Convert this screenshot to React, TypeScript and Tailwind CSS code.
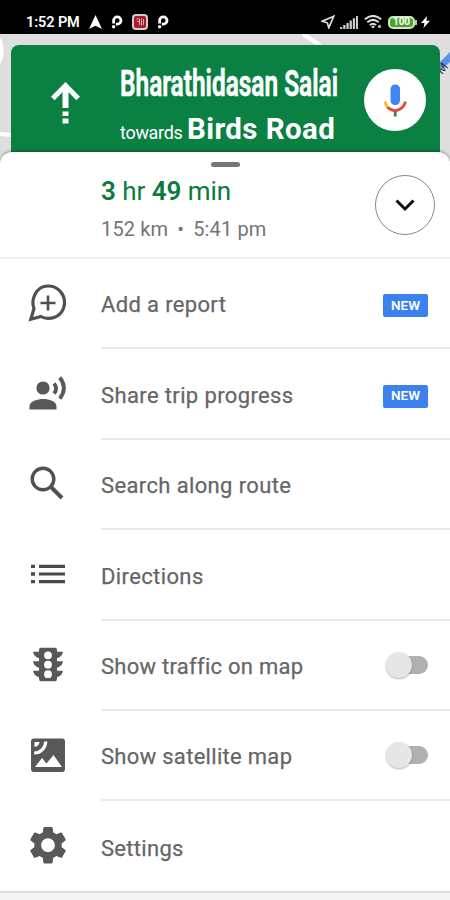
import React from 'react';

interface MenuItem {
  label: string;
  icon: React.ReactNode;
  badge?: string;
  toggle?: boolean;
  labelClass: string;
}

// All menu icons share a 48x48 box, centered at 24,24
const ReportIcon = () => (
  <svg width="48" height="48" viewBox="0 0 48 48" fill="none" stroke="#505050" strokeWidth="3.2">
    <path d="M7.800 40.200L11 29.500C7.500 21 13 7 25 7C34.500 7 41.500 14.500 41.500 23.500C41.500 32.500 35 39.300 25 39.300C22 39.300 19.800 38.600 18 37.500Z" />
    <path d="M25 16.500v15M17.500 24h15" strokeWidth="2.6" />
  </svg>
);

const ShareIcon = () => (
  <svg width="48" height="48" viewBox="0 0 48 48" fill="#585858">
    <circle cx="20" cy="19" r="6.6" />
    <path d="M6.5 40.5V37.2C6.5 32.5 14.5 30 20.2 30S33.5 32.5 33.5 37.2v3.3z" />
    <path d="M31 14.5Q35.3 19.5 31 24.5M36.8 8.5Q45 19 36.8 29.5" fill="none" stroke="#585858" strokeWidth="3.8" />
  </svg>
);

const SearchIcon = () => (
  <svg width="48" height="48" viewBox="0 0 48 48" fill="none" stroke="#505050" strokeWidth="3.4">
    <circle cx="20" cy="20" r="10.8" />
    <path d="M28.5 28.5L39 39" strokeWidth="4" />
  </svg>
);

const ListIcon = () => (
  <svg width="48" height="48" viewBox="0 0 48 48" fill="#4a4a4a">
    <path d="M8 14.7h4v3.4H8zM8 22.3h4v3.4H8zM8 29.9h4v3.4H8zM16 14.7h26v3.2H16zM16 22.4h26v3.2H16zM16 30h26v3.2H16z" />
  </svg>
);

const TrafficIcon = () => (
  <svg width="48" height="48" viewBox="0 0 48 48" fill="#585858">
    <path
      transform="translate(0 .8)"
      fillRule="evenodd"
      d="M18 7h14q2 0 2 2v2h6q-1 5-6 6.500v3h6q-1 5-6 6.500v3h6q-1 5-6 6.500v1.500q0 2.500-2 2.500H18q-2 0-2-2.500v-1.500q-5-1.500-6-6.500h6v-3q-5-1.500-6-6.500h6v-3q-5-1.500-6-6.500h6V9q0-2 2-2zM25 10.600a3.900 3.900 0 1 0 0 7.800 3.900 3.900 0 1 0 0-7.800zM25 20a3.900 3.900 0 1 0 0 7.800 3.900 3.900 0 1 0 0-7.800zM25 29.500a3.900 3.900 0 1 0 0 7.800 3.900 3.900 0 1 0 0-7.800z"
    />
  </svg>
);

const SatelliteIcon = () => (
  <svg width="48" height="48" viewBox="0 0 48 48">
    <rect x="8" y="7.500" width="34" height="33.500" rx="3" fill="#585858" />
    <path d="M11.500 11h5q-.5 4.500-5 5z" fill="#fff" />
    <path d="M22.700 10.500a11.500 11.500 0 0 1-11.500 11.500" fill="none" stroke="#fff" strokeWidth="3.200" />
    <path d="M12 36l7-9 4.500 5.500L30.500 24 39 36z" fill="#fff" />
  </svg>
);

const SettingsIcon = () => (
  <svg width="48" height="48" viewBox="0 0 48 48">
    <path
      transform="translate(2.200 1.400) scale(1.900)"
      fill="#585858"
      d="M19.140 12.940c.04-.3.06-.61.06-.94 0-.32-.02-.64-.07-.94l2.030-1.580c.18-.14.23-.41.12-.61l-1.920-3.320c-.12-.22-.37-.29-.59-.22l-2.390.96c-.5-.38-1.030-.7-1.620-.94l-.36-2.540c-.04-.24-.24-.41-.48-.41h-3.840c-.24 0-.43.17-.47.41l-.36 2.540c-.59.24-1.130.57-1.620.94l-2.390-.96c-.22-.08-.47 0-.59.22L2.740 8.870c-.12.21-.08.47.12.61l2.030 1.580c-.05.3-.09.63-.09.94s.02.64.07.94l-2.030 1.580c-.18.14-.23.41-.12.61l1.920 3.320c.12.22.37.29.59.22l2.390-.96c.5.38 1.030.7 1.620.94l.36 2.540c.05.24.24.41.48.41h3.840c.24 0 .44-.17.47-.41l.36-2.540c.59-.24 1.130-.56 1.620-.94l2.390.96c.22.08.47 0 .59-.22l1.920-3.320c.12-.22.07-.47-.12-.61l-2.010-1.580zM12 15.600c-1.980 0-3.600-1.620-3.600-3.600s1.620-3.600 3.600-3.600 3.600 1.620 3.600 3.600-1.620 3.600-3.600 3.600z"
    />
  </svg>
);

const menuItems: MenuItem[] = [
  { label: 'Add a report', icon: <ReportIcon />, badge: 'NEW', labelClass: 'tracking-[0.35px]' },
  { label: 'Share trip progress', icon: <ShareIcon />, badge: 'NEW', labelClass: 'tracking-[0.37px]' },
  { label: 'Search along route', icon: <SearchIcon />, labelClass: 'tracking-[0.37px]' },
  { label: 'Directions', icon: <ListIcon />, labelClass: 'tracking-[0.38px]' },
  { label: 'Show traffic on map', icon: <TrafficIcon />, toggle: true, labelClass: 'tracking-[0.27px]' },
  { label: 'Show satellite map', icon: <SatelliteIcon />, toggle: true, labelClass: 'tracking-[0.3px]' },
  { label: 'Settings', icon: <SettingsIcon />, labelClass: 'tracking-[0.3px]' },
];

const ParkIcon = () => (
  <svg width="13" height="14" viewBox="0 0 13 14" fill="none" stroke="#fff" strokeWidth="2.800">
    <path d="M2.600 8.500V5.500a3.700 3.700 0 1 1 3.700 3.700H4.800" />
    <circle cx="2.600" cy="11.800" r="1.700" fill="#fff" stroke="none" />
  </svg>
);

const StatusBar = () => (
  <header className="flex h-[34px] shrink-0 items-center bg-black pt-[10px] pr-[20px] pl-[26px] text-white">
    <span className="w-[63px] pt-[2px] text-[14.5px] leading-none font-semibold tracking-[-0.1px] whitespace-nowrap">1:52 PM</span>
    <svg width="13" height="14" viewBox="0 0 13 14" fill="#fff">
      <path d="M6.500 0L13 14 6.500 10.800 0 14z" />
    </svg>
    <span className="ml-[9px]"><ParkIcon /></span>
    <svg className="ml-[8px]" width="16" height="16" viewBox="0 0 16 16">
      <rect x="1" y="1" width="14" height="14" rx="3" fill="#a51d2d" stroke="#d7cbd0" strokeWidth="2" />
      <path d="M4.500 5h3v6M5 7.500h2M9.500 4.500v7M11.500 5v6" fill="none" stroke="#e3a4aa" strokeWidth="1" />
    </svg>
    <span className="ml-[9px]"><ParkIcon /></span>
    <div className="ml-auto flex items-center">
      <svg width="14" height="14" viewBox="0 0 14 14" fill="none" stroke="#ddd" strokeWidth="1.700">
        <path d="M12.800 1.200L1.300 6.200l5 1.600 1.500 5z" />
      </svg>
      <svg className="ml-[5px]" width="18" height="13" viewBox="0 0 18 13" fill="#ccc">
        <path d="M0 11h2.300v2H0zM3.200 9h2.300v4H3.200zM6.400 7h2.300v6H6.400zM9.600 4.500h2.300V13H9.600zM12.800 2.300h2.300V13h-2.300zM16 0h2v13h-2z" />
      </svg>
      <svg className="ml-[6px]" width="18" height="14" viewBox="0 0 18 14" fill="none" stroke="#ddd" strokeWidth="2">
        <path d="M.8 4.200Q9-2.400 17.200 4.200M3.300 7.200Q9 2.600 14.700 7.200M5.800 10Q9 7.400 12.200 10" />
        <path d="M9 10.200l1.800 1.500L9 13.500l-1.800-1.800z" fill="#ddd" stroke="none" />
        <circle cx="15.500" cy="11.500" r="1.800" fill="#aaa" stroke="none" />
      </svg>
      <span className="ml-[6px] flex h-[13px] w-[27px] items-center justify-center rounded-[5px] border-2 border-[#cfe8c4] bg-[#4aa626] text-[10px] leading-none font-bold">
        100
      </span>
      <span className="h-[5px] w-[2px] bg-[#bbb]" />
      <svg className="ml-[4px]" width="9" height="12" viewBox="0 0 9 12" fill="#fff">
        <path d="M6 0L0 7h3.500L2.500 12 9 4.700H5.300z" />
      </svg>
    </div>
  </header>
);

const MicButton = () => (
  <button className="flex size-[62px] items-center justify-center rounded-full bg-white">
    <svg width="26" height="36" viewBox="0 0 26 36" fill="none">
      <rect x="8.500" y="2.500" width="9.500" height="20.500" rx="4.500" fill="#4285f4" />
      <path d="M3 19.500Q3.300 23 6 25.700" stroke="#fbbc05" strokeWidth="2.800" />
      <path d="M5.500 25.200Q13 32 20.500 25.200Q23 22.500 23.400 19.500" stroke="#dd4b3e" strokeWidth="2.800" />
      <path d="M13.200 29.500v5" stroke="#34853f" strokeWidth="2.800" />
    </svg>
  </button>
);

const DirectionBanner = () => (
  <section className="mr-[10px] ml-[11px] flex h-[120px] rounded-[8px] bg-[#0b8043] text-white">
    <svg className="mt-[36px] ml-[40px] shrink-0" width="29" height="44" viewBox="0 0 29 44" fill="none" stroke="#fff">
      <path d="M1.800 17.500L14.500 4.500l12.700 13" strokeWidth="5" />
      <path d="M14.500 5v22" strokeWidth="6" />
      <path d="M14.500 30.500v4.500M14.500 37.500v5" strokeWidth="6" />
    </svg>
    <div className="ml-[40px] w-[244px] pt-[18px] whitespace-nowrap">
      <h1 className="w-max origin-left scale-x-[0.66] text-[37px] leading-[42px] font-semibold [-webkit-text-stroke:0.7px_#fff]">Bharathidasan Salai</h1>
      <p className="flex items-baseline pt-[7px] leading-[34px]">
        <span className="w-[67px] text-[18px] tracking-[-0.3px]">towards</span>
        <b className="text-[29.5px] font-bold tracking-[0.4px]">Birds Road</b>
      </p>
    </div>
    <div className="mt-[24px]"><MicButton /></div>
  </section>
);

const Toggle = () => (
  <span className="flex h-[27px] w-[42px] items-center">
    <span className="z-10 size-[26px] shrink-0 rounded-full bg-[#e6e6e6] shadow-[0_1px_2px_rgba(0,0,0,0.3)]" />
    <span className="-ml-[13px] h-[18px] w-[29px] rounded-r-full bg-[#b0b0b0]" />
  </span>
);

const MenuRow: React.FC<{ item: MenuItem; last: boolean }> = ({ item, last }) => (
  <li className="flex h-[90.4px] shrink-0 pl-[23px]">
    <span className="flex w-[78px] items-center pb-[3px]">{item.icon}</span>
    <div className={`flex flex-1 items-center justify-between pr-[22px] ${last ? '' : 'border-b-2 border-[#e9e9e9]'}`}>
      <span className={`pt-[4.6px] text-[22px] leading-[28px] whitespace-nowrap text-[#666] [-webkit-text-stroke:0.25px_#666] ${item.labelClass}`}>{item.label}</span>
      {item.badge && (
        <span className="mt-[5px] flex h-[23px] w-[45px] items-center justify-center rounded-[2px] bg-[#3b82ee] text-[13.5px] leading-none font-semibold text-white">
          {item.badge}
        </span>
      )}
      {item.toggle && <Toggle />}
    </div>
  </li>
);

const App: React.FC = () => {
  return (
    <div className="flex h-[900px] w-[450px] flex-col overflow-hidden bg-[#dedede] font-[Roboto,sans-serif]">
      <StatusBar />
      <div className="relative h-[118px] shrink-0 pt-[11px]">
        {/* Bits of the map that show around the banner */}
        <svg className="absolute inset-0" width="450" height="130" viewBox="0 0 450 130">
          <path d="M0 4q5 5 3 20L0 30z" fill="#fff" />
          <path d="M303 0l17 11M0 100l12 1" stroke="#fff" strokeWidth="4" />
          <path d="M438 30l12-12v10l-12 11z" fill="#5b94e6" />
          <text x="442" y="41" fontSize="12" fill="#333" transform="rotate(-50 442 41)">M</text>
        </svg>
        <div className="relative"><DirectionBanner /></div>
      </div>

      <main className="relative flex flex-1 flex-col rounded-t-[12px] bg-white shadow-[0_-1px_3px_rgba(0,0,0,0.35)]">
        <div className="flex h-[107px] shrink-0 flex-col border-b-2 border-[#f2f2f2]">
          <span className="mt-[10px] ml-[211px] h-[5px] w-[29px] shrink-0 rounded-full bg-[#757578]" />
          <div className="flex justify-between pr-[15px] pl-[101px]">
            <div className="whitespace-nowrap">
              <p className="pt-[8px] text-[26px] leading-[32px] tracking-[-0.05px] text-[#0b7a3c]">
                <b className="font-semibold">3</b> hr <b className="font-semibold">49</b> min
              </p>
              <p className="pt-[9px] text-[20px] leading-[26px] tracking-[0.15px] text-[#757575]">
                152 km<span className="mx-[9px]">•</span>5:41 pm
              </p>
            </div>
            <button className="mt-[8px] flex size-[60px] items-center justify-center rounded-full border border-[#888]">
              <svg width="20" height="14" viewBox="0 0 20 14" fill="none" stroke="#111" strokeWidth="3">
                <path d="M1.500 2.500l8.500 8.500 8.500-8.500" />
              </svg>
            </button>
          </div>
        </div>
        <ul className="flex flex-col">
          {menuItems.map((item, i) => (
            <MenuRow key={item.label} item={item} last={i === menuItems.length - 1} />
          ))}
        </ul>
        <footer className="-mt-[1px] flex-1 border-t-2 border-[#dedede] bg-[#f4f4f4]" />
      </main>
    </div>
  );
};

export default App;
